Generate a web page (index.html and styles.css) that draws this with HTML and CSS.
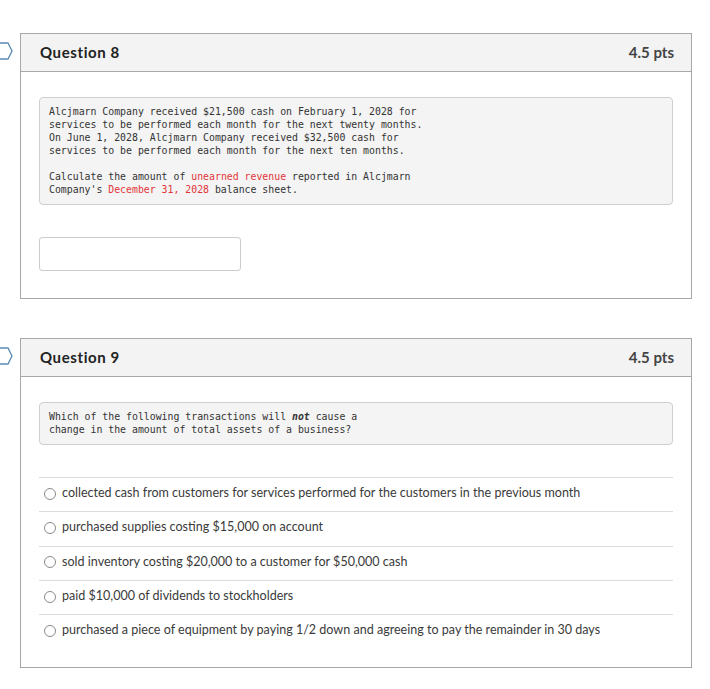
FILE: index.html
```html
<!DOCTYPE html>
<html lang="en">
<head>
<meta charset="utf-8">
<title>Questions</title>
<link rel="stylesheet" href="styles.css">
</head>
<body>
<main class="page">
  <section class="question-row">
    <div class="marker">
      <svg class="marker-icon" width="20" height="18" viewBox="0 0 20 18"><path d="M-4 1 H8 L12 9 L8 17 H-4" fill="none" stroke="#5b8ab4" stroke-width="1.3"/></svg>
    </div>
    <div class="card">
      <header class="card-head">
        <h2 class="q-title">Question 8</h2>
        <span class="q-pts">4.5 pts</span>
      </header>
      <div class="card-body">
        <div class="prompt">
          <div class="line">Alcjmarn Company received $21,500 cash on February 1, 2028 for</div>
          <div class="line">services to be performed each month for the next twenty months.</div>
          <div class="line">On June 1, 2028, Alcjmarn Company received $32,500 cash for</div>
          <div class="line">services to be performed each month for the next ten months.</div>
          <div class="line blank"></div>
          <div class="line">Calculate the amount of <span class="hl">unearned revenue</span> reported in Alcjmarn</div>
          <div class="line">Company's <span class="hl">December 31, 2028</span> balance sheet.</div>
        </div>
        <input class="answer" type="text" aria-label="Answer">
      </div>
    </div>
  </section>

  <section class="question-row">
    <div class="marker">
      <svg class="marker-icon" width="20" height="18" viewBox="0 0 20 18"><path d="M-4 1 H8 L12 9 L8 17 H-4" fill="none" stroke="#5b8ab4" stroke-width="1.3"/></svg>
    </div>
    <div class="card">
      <header class="card-head">
        <h2 class="q-title">Question 9</h2>
        <span class="q-pts">4.5 pts</span>
      </header>
      <div class="card-body">
        <div class="prompt">
          <div class="line">Which of the following transactions will <em class="em">not</em> cause a</div>
          <div class="line">change in the amount of total assets of a business?</div>
        </div>
        <ul class="options">
          <li class="option"><span class="radio"></span>collected cash from customers for services performed for the customers in the previous month</li>
          <li class="option"><span class="radio"></span>purchased supplies costing $15,000 on account</li>
          <li class="option"><span class="radio"></span>sold inventory costing $20,000 to a customer for $50,000 cash</li>
          <li class="option"><span class="radio"></span>paid $10,000 of dividends to stockholders</li>
          <li class="option"><span class="radio"></span>purchased a piece of equipment by paying 1/2 down and agreeing to pay the remainder in 30 days</li>
        </ul>
      </div>
    </div>
  </section>
</main>
</body>
</html>
```

FILE: styles.css
```css
* { box-sizing: border-box; }
html, body { margin: 0; padding: 0; background: #fff; }
body {
  font-family: Lato, "Open Sans", Arial, sans-serif;
  color: #333;
}
.page {
  padding: 33px 18px 0 0;
  display: flex;
  flex-direction: column;
  gap: 39px;
  width: 710px;
}
.question-row {
  display: flex;
}
.marker {
  width: 20px;
  flex: none;
}
.marker-icon {
  display: block;
  margin-top: 9px;
  overflow: visible;
}
.card {
  width: 672px;
  border: 1px solid #a8a8a8;
  background: #fff;
}
.card-head {
  height: 38px;
  background: #f3f3f3;
  border-bottom: 1px solid #a8a8a8;
  display: flex;
  align-items: center;
  justify-content: space-between;
  padding: 0 17px 2px 19px;
}
.q-title {
  margin: 0;
  font-size: 15px;
  font-weight: 700;
  letter-spacing: 0.6px;
  color: #222;
}
.q-pts {
  font-size: 15px;
  font-weight: 700;
  color: #444;
}
.card-body {
  padding: 25px 18px 27px 18px;
}
.prompt {
  margin: 0;
  background: #f4f4f4;
  border: 1px solid #cfcfcf;
  border-radius: 4px;
  padding: 7px 9px 8px;
  font-family: "DejaVu Sans Mono", "Liberation Mono", monospace;
  font-size: 9.85px;
  line-height: 13px;
  color: #333;
}
.line {
  white-space: pre;
  height: 13px;
}
.hl { color: #e2343a; }
.em { font-style: italic; font-weight: 700; }
.answer {
  display: block;
  margin-top: 32px;
  width: 202px;
  height: 34px;
  border: 1px solid #cccccc;
  border-radius: 3px;
  background: #fff;
}
.options {
  list-style: none;
  margin: 32px 0 0;
  padding: 0;
}
.option {
  display: flex;
  align-items: center;
  border-top: 1px solid #dcdcdc;
  height: 34.3px;
  padding-bottom: 4px;
  font-size: 12.55px;
  color: #3a3a3a;
}
.option:last-child { margin-bottom: -8px; }
.radio {
  width: 12px;
  height: 12px;
  border: 1px solid #8a8a8a;
  border-radius: 50%;
  margin: 2px 6px 0 5px;
  flex: none;
}
```
